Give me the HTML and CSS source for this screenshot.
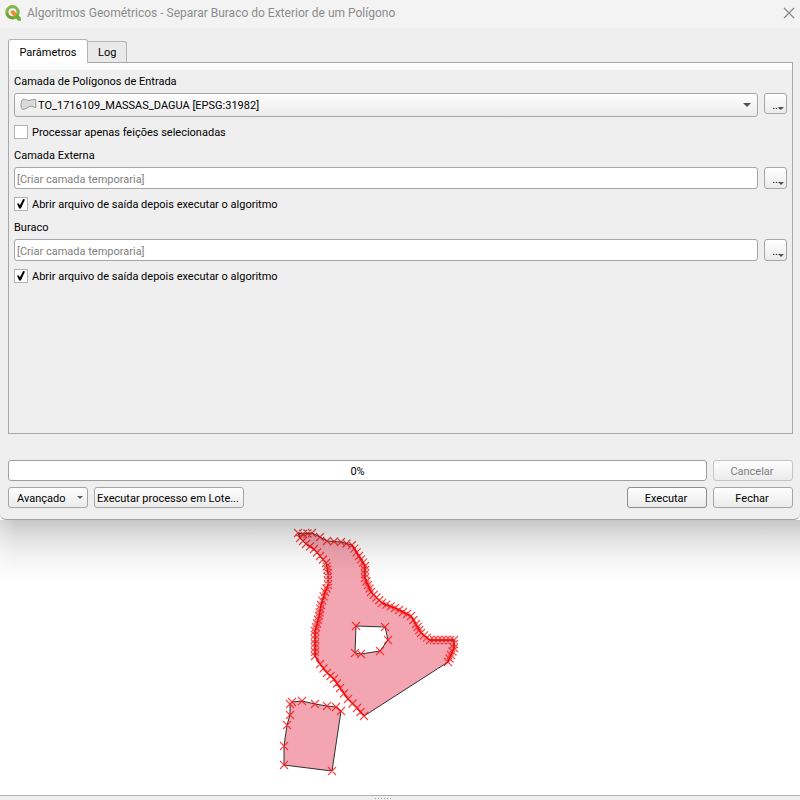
FILE: index.html
```html
<!DOCTYPE html>
<html lang="pt-BR">
<head>
<meta charset="utf-8">
<meta name="viewport" content="width=device-width, initial-scale=1">
<title>Algoritmos Geométricos</title>
<link rel="stylesheet" href="styles.css">
</head>
<body>
<section class="dialog" aria-labelledby="dialog-title">
  <header class="titlebar">
    <svg class="logo" viewBox="0 0 16 16" aria-hidden="true">
      <circle cx="7.5" cy="7.3" r="5.6" fill="none" stroke="#82b848" stroke-width="3.2"/>
      <path d="M2 8.5A5.6 5.6 0 0 0 9 12.7" fill="none" stroke="#6a9f37" stroke-width="2.6"/>
      <path d="M9.6 9.1h2.6l3.6 3.6v3h-2.6l-3.6-3.8z" fill="#6fac35"/>
      <path d="M5.8 5.6h3l2.4 2.5v2.8H8.6L5.8 8.3z" fill="#e98a3a"/>
    </svg>
    <h1 class="title" id="dialog-title">Algoritmos Geométricos - Separar Buraco do Exterior de um Polígono</h1>
    <button class="close" type="button" aria-label="Fechar janela">
      <svg viewBox="0 0 12 12" aria-hidden="true"><path d="M1 1l10 10M11 1L1 11" fill="none" stroke="#858585" stroke-width="1.1"/></svg>
    </button>
  </header>

  <div class="content">
    <div class="tabs" role="tablist">
      <button class="tab tab-active" type="button" role="tab" aria-selected="true">Parâmetros</button>
      <button class="tab" type="button" role="tab" aria-selected="false">Log</button>
    </div>

    <div class="panel" role="tabpanel">
      <label class="label" for="layer">Camada de Polígonos de Entrada</label>
      <div class="row">
        <div class="combo">
          <svg class="polygon-icon" viewBox="0 0 17 13" aria-hidden="true"><path d="M2.5 1.5C5 .2 6.500 2.800 9 2.500S13 .8 15.500 1.500C16.200 4 15.500 6 16 9.300c-1.500.8-3-1.300-5.200-1.100S6 11.300 2.500 11.500C.2 9 .8 4 2.500 1.500z" fill="#dadada" stroke="#999"/></svg>
          <select class="select" id="layer">
            <option>TO_1716109_MASSAS_DAGUA [EPSG:31982]</option>
          </select>
          <span class="arrow"></span>
        </div>
        <button class="more" type="button" aria-label="Opções da camada">...<span class="more-arrow"></span></button>
      </div>
      <label class="check"><input type="checkbox"><span>Processar apenas feições selecionadas</span></label>

      <label class="label" for="outer">Camada Externa</label>
      <div class="row">
        <input class="field" id="outer" type="text" placeholder="[Criar camada temporaria]">
        <button class="more" type="button" aria-label="Opções da camada externa">...<span class="more-arrow"></span></button>
      </div>
      <label class="check"><input type="checkbox" checked><span>Abrir arquivo de saída depois executar o algoritmo</span></label>

      <label class="label" for="hole">Buraco</label>
      <div class="row">
        <input class="field" id="hole" type="text" placeholder="[Criar camada temporaria]">
        <button class="more" type="button" aria-label="Opções do buraco">...<span class="more-arrow"></span></button>
      </div>
      <label class="check"><input type="checkbox" checked><span>Abrir arquivo de saída depois executar o algoritmo</span></label>
    </div>

    <div class="footer">
      <div class="progress" role="progressbar" aria-valuenow="0" aria-valuemin="0" aria-valuemax="100">0%</div>
      <button class="button" type="button" disabled>Cancelar</button>
    </div>
    <div class="footer">
      <button class="button button-menu" type="button">Avançado<span class="menu-arrow"></span></button>
      <button class="button button-batch" type="button">Executar processo em Lote...</button>
      <span class="spacer"></span>
      <button class="button button-run" type="button">Executar</button>
      <button class="button" type="button">Fechar</button>
    </div>
  </div>
</section>

<main class="map">
  <svg class="canvas" viewBox="0 520 800 275" preserveAspectRatio="xMidYMin meet" role="img" aria-label="Polígonos no mapa">
    <path id="fill" fill="#f3a6b2" fill-rule="evenodd" stroke="#303030" stroke-width="1"/>
    <path id="dense" fill="none" stroke="#e00000" stroke-width="1.4" stroke-opacity=".8"/>
    <path id="vertices" fill="none" stroke="#ff1010" stroke-width="1.1" stroke-opacity=".8"/>
  </svg>
</main>
<div class="splitter"><i></i><i></i><i></i><i></i><i></i><i></i></div>
<script src="map.js"></script>
</body>
</html>
```
FILE: styles.css
```css
* { box-sizing: border-box; }

body {
  margin: 0;
  min-height: 100vh;
  display: flex;
  flex-direction: column;
  background: #fff;
  color: #000;
  font: 11px/16px Roboto, sans-serif;
  overflow-x: hidden;
}

button, input, select { font: inherit; color: inherit; }

.dialog {
  position: relative;
  background: #efefef;
  border-bottom: 1px solid #a0a0a0;
  border-radius: 0 0 6px 6px;
}

.dialog::after {
  content: "";
  position: absolute;
  left: 0;
  right: 0;
  top: 100%;
  height: 64px;
  margin-top: 1px;
  background:
    linear-gradient(90deg, rgba(255, 255, 255, .3), transparent 16px),
    linear-gradient(rgba(0, 0, 0, .22), rgba(0, 0, 0, .13) 25%, rgba(0, 0, 0, .05) 55%, rgba(0, 0, 0, .01) 85%, transparent);
  pointer-events: none;
}

.titlebar {
  display: flex;
  align-items: center;
  height: 28px;
  padding: 0 5px;
  background: #f3f3f3;
}

.logo { width: 16px; height: 16px; margin-bottom: 2px; }

.title {
  flex: 1;
  margin: 0 0 2px 6px;
  color: #8c8c8c;
  font: 12px/16px Roboto, sans-serif;
}

.close {
  display: flex;
  padding: 0;
  margin-bottom: 3px;
  border: 0;
  background: none;
}

.close svg { width: 12px; height: 12px; }

.content { padding: 11px 7px 11px 8px; }

.tabs {
  display: flex;
  align-items: flex-end;
}

.tab {
  height: 21px;
  padding: 2px 10px 0;
  border: 1px solid #b4b4b4;
  border-left: 0;
  border-bottom: 0;
  border-radius: 0 3px 0 0;
  background: #e9e9e9;
}

.tab-active {
  position: relative;
  min-width: 80px;
  height: 24px;
  margin-bottom: -1px;
  border-left: 1px solid #a8a8a8;
  border-radius: 3px 3px 0 0;
  background: #fff;
}

.panel {
  min-height: 372px;
  padding: 11px 5px;
  border: 1px solid #a8a8a8;
  background: linear-gradient(#fcfcfc 7px, #efefef 7px);
}

.label { display: block; margin-bottom: 3px; }

.row {
  display: flex;
  align-items: flex-start;
  gap: 6px;
}

.combo {
  position: relative;
  flex: 1;
  display: flex;
}

.select, .field {
  width: 100%;
  min-width: 0;
  border: 1px solid #a6a6a6;
  border-radius: 3px;
}

.select {
  appearance: none;
  height: 24px;
  padding: 2px 28px 0 23px;
  background: linear-gradient(#fefefe, #ebebeb);
}

.polygon-icon {
  position: absolute;
  left: 6px;
  top: 5px;
  width: 17px;
  height: 13px;
}

.arrow {
  position: absolute;
  right: 7px;
  top: 10px;
  border: 4px solid transparent;
  border-top-color: #505050;
  border-bottom: 0;
}

.field {
  flex: 1;
  height: 22px;
  padding: 2px 2px 0;
  background: #fff;
}

.field::placeholder { color: #808080; opacity: 1; }

.more {
  position: relative;
  width: 23px;
  height: 21px;
  padding: 4px 0 0 2px;
  border: 1px solid #a6a6a6;
  border-radius: 3px;
  background: linear-gradient(#fefefe, #ebebeb);
  line-height: 14px;
}

.field + .more { height: 22px; }

.more-arrow {
  position: absolute;
  right: 2px;
  bottom: 3px;
  border: 3px solid transparent;
  border-top-color: #505050;
  border-bottom: 0;
}

.check {
  display: flex;
  align-items: center;
  gap: 4px;
  width: max-content;
  margin: 7px 0 8px;
  line-height: 14px;
}

.check span { padding-top: 2px; }

.check input {
  appearance: none;
  width: 14px;
  height: 14px;
  margin: 0;
  border: 1px solid #b4b4b4;
  background: #fff;
}

.check input:checked::before {
  content: "";
  display: block;
  width: 8px;
  height: 10px;
  margin: 1px 2px;
  background: #000;
  clip-path: polygon(0 48%, 20% 42%, 36% 62%, 78% 0, 100% 6%, 48% 94%, 28% 94%);
}

.footer {
  display: flex;
  gap: 6px;
  margin-top: 6px;
}

.panel + .footer { margin-top: 26px; }

.progress {
  flex: 1;
  height: 21px;
  border: 1px solid #a0a0a0;
  border-radius: 3px;
  background: #fff;
  line-height: 21px;
  text-align: center;
}

.button {
  width: 80px;
  height: 21px;
  padding: 2px 2px 0 0;
  border: 1px solid #a6a6a6;
  border-radius: 3px;
  background: linear-gradient(#fefefe, #ebebeb);
  white-space: nowrap;
}

.button:disabled { border-color: #c4c4c4; color: #808080; }
.button-run { border-color: #8f8f8f; }
.button-batch { width: 150px; }

.button-menu {
  display: flex;
  align-items: center;
  justify-content: space-between;
  padding: 2px 4px 0 8px;
}

.menu-arrow {
  margin-bottom: 2px;
  border: 3px solid transparent;
  border-top-color: #606060;
  border-bottom: 0;
}

.spacer { flex: 1; }

.map { flex: 1; display: flex; }
.canvas { display: block; width: 100%; }

.splitter {
  display: flex;
  justify-content: center;
  gap: 2px;
  height: 5px;
  padding: 2px 34px 0 0;
  border-top: 1px solid #b0b0b0;
  background: #efefef;
}

.splitter i { width: 1px; height: 1px; background: #a0a0a0; }
```
FILE: map.js
```js
// Rings as [x, y]; stretches with many vertices are subdivided by distance.
const eastBank = [[298,533],[303,534],[312,533],[320,537],[327,541],[341,542],[352,545],[359,556],[365,566],[365,578],[371,592],[382,603],[395,608],[411,616],[416,624],[421,633],[430,640],[454,640],[454,648],[448,662]];
const westBank = [[364,716],[357,708],[348,699],[340,688],[334,679],[327,673],[320,664],[315,656],[315,631],[319,616],[321,605],[325,592],[328,585],[328,573],[326,563],[320,556],[314,549],[306,544],[300,538],[298,533]];
const hole = [[356,626],[385,627],[388,640],[380,651],[361,654],[355,653]];
const plot = [[292,702],[302,701],[315,704],[327,706],[336,707],[341,711],[332,771],[284,765],[284,746],[287,725],[290,715],[290,704]];

function subdivide(points, step) {
  const result = [points[0]];
  for (let i = 1; i < points.length; i++) {
    const [x0, y0] = points[i - 1];
    const [x1, y1] = points[i];
    const n = Math.max(1, Math.round(Math.hypot(x1 - x0, y1 - y0) / step));
    for (let k = 1; k <= n; k++) result.push([x0 + (x1 - x0) * k / n, y0 + (y1 - y0) * k / n]);
  }
  return result;
}

const line = points => "M" + points.map(p => p.join(" ")).join("L");
const cross = ([x, y]) => `M${x - 4} ${y - 4}l8 8m0 -8l-8 8`;

document.getElementById("fill").setAttribute("d", [[...eastBank, ...westBank], hole, plot].map(p => line(p) + "Z").join(""));
document.getElementById("dense").setAttribute("d", line(eastBank.slice(6)) + line(westBank.slice(0, 13)));
document.getElementById("vertices").setAttribute("d", [
  ...subdivide(eastBank.slice(0, 7), 6),
  ...subdivide(eastBank.slice(6), 4),
  ...subdivide(westBank.slice(0, 7), 6),
  ...subdivide(westBank.slice(7), 4),
  ...hole, ...plot
].map(cross).join(""));
```
